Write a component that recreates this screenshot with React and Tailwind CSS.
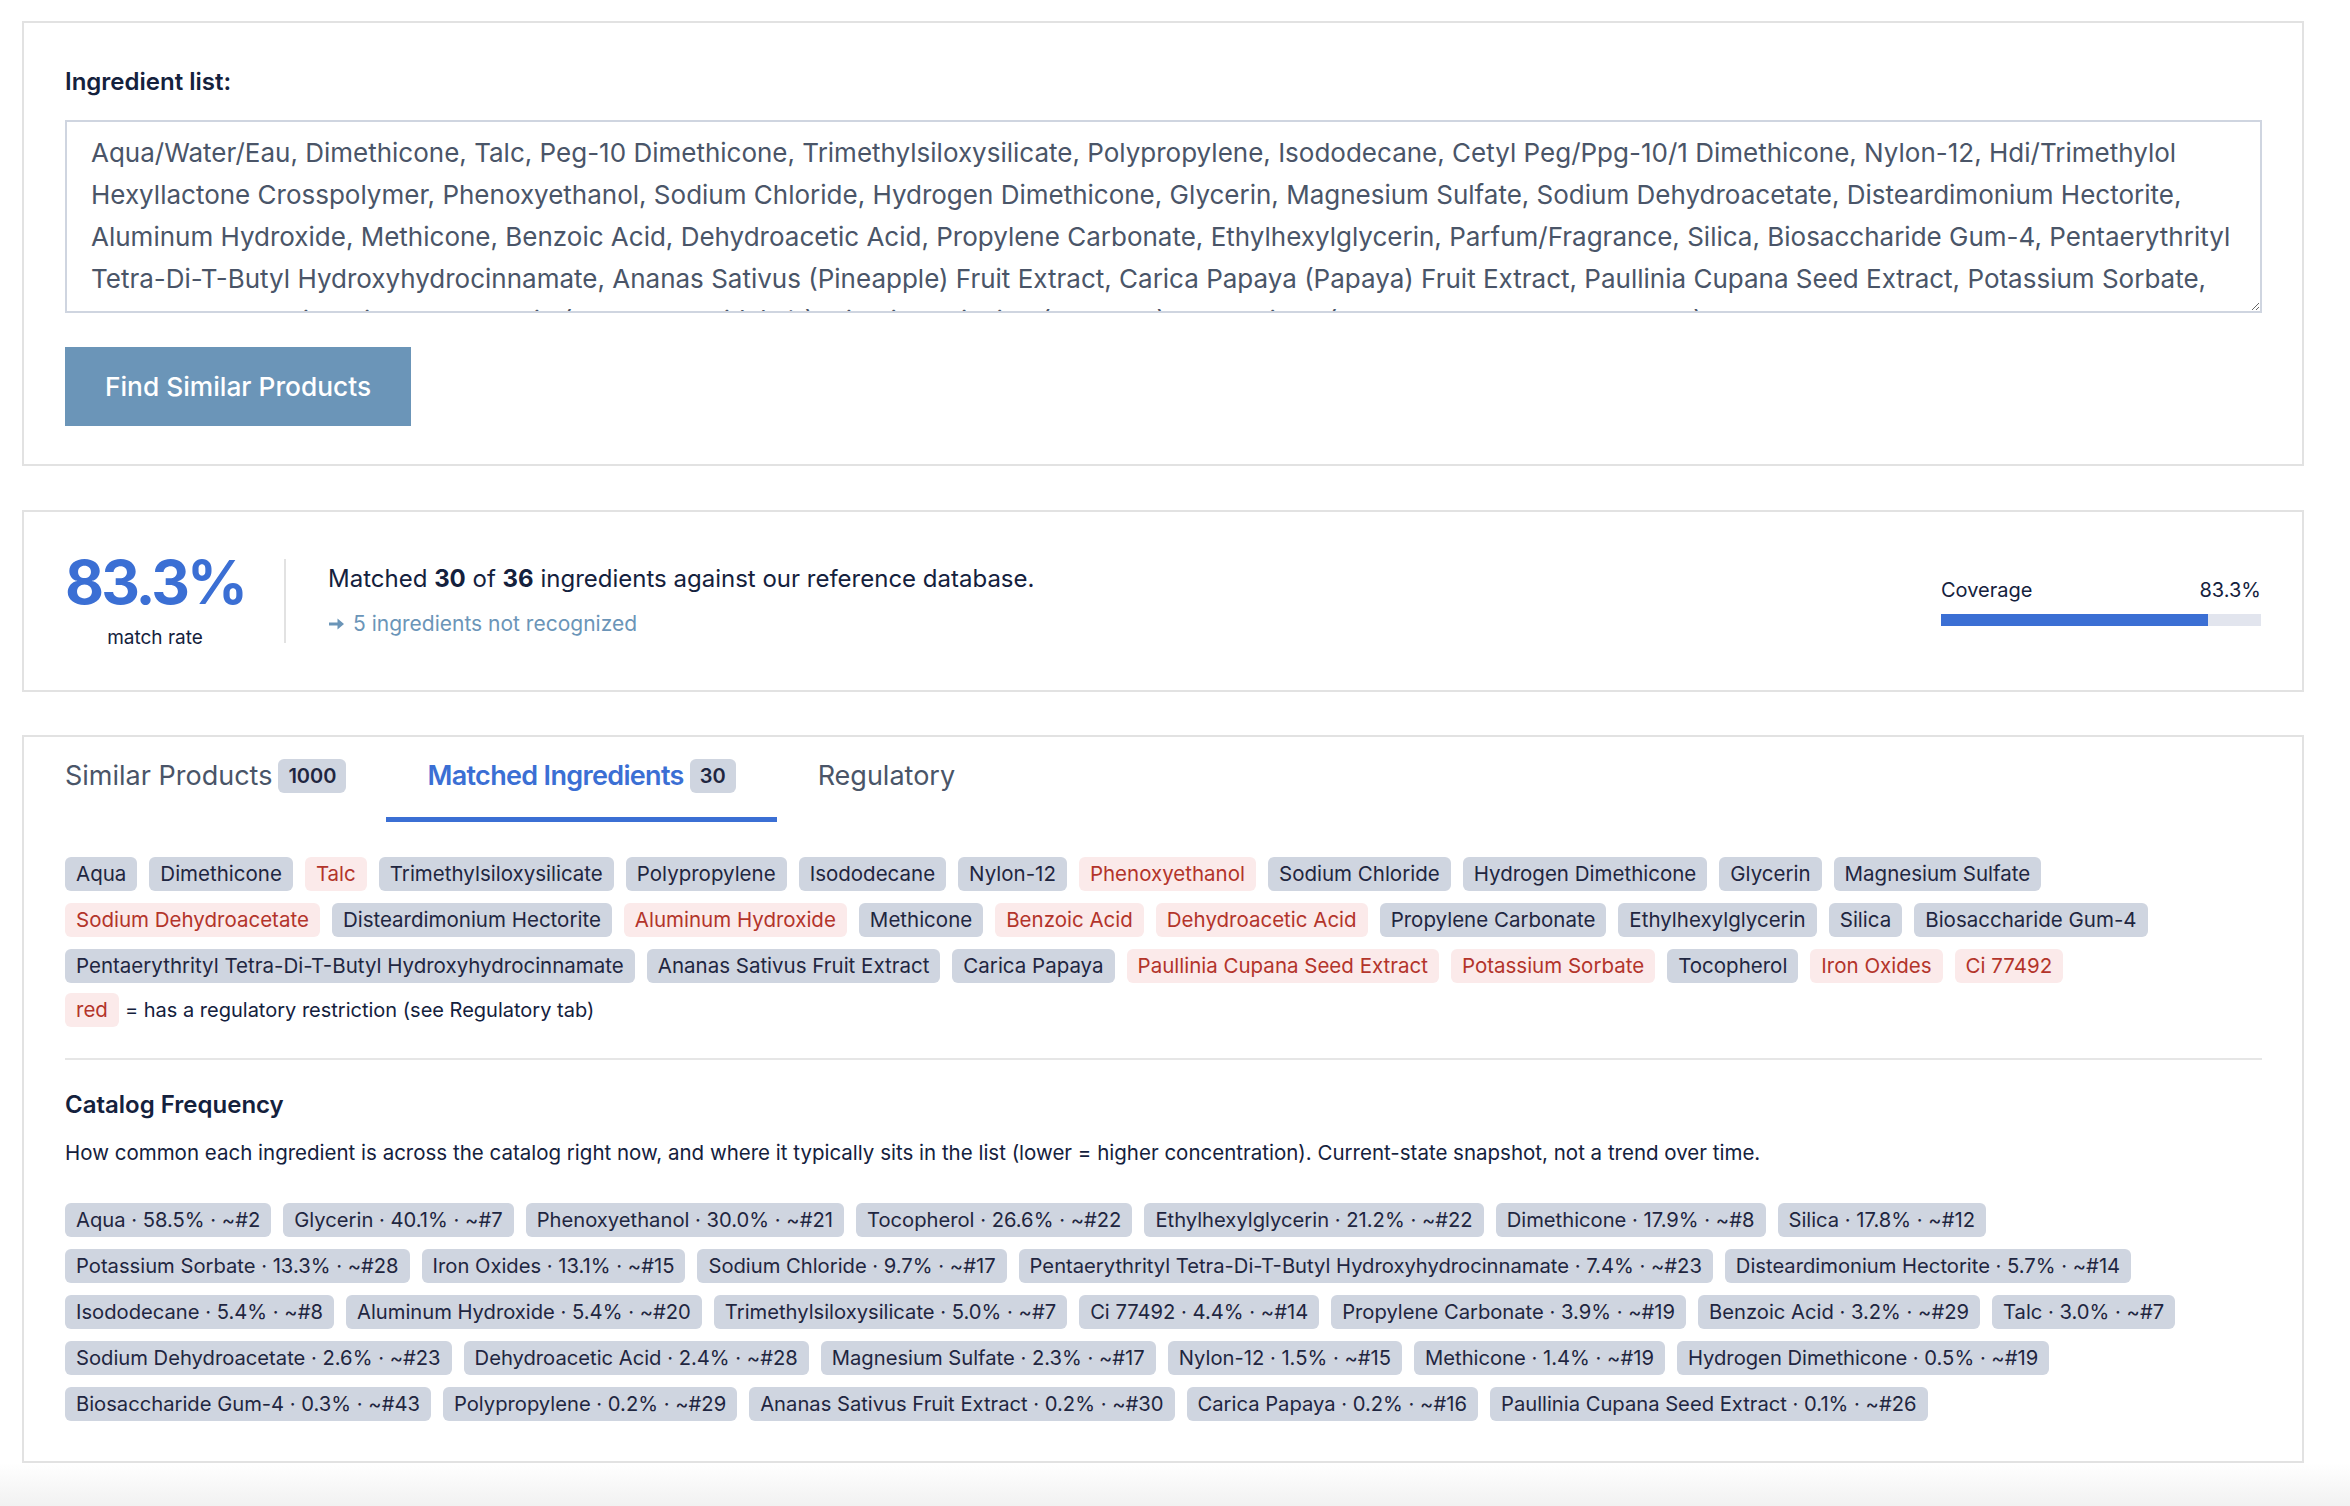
import React, { useState } from 'react';

const INGREDIENTS =
  'Aqua/Water/Eau, Dimethicone, Talc, Peg-10 Dimethicone, Trimethylsiloxysilicate, Polypropylene, Isododecane, Cetyl Peg/Ppg-10/1 Dimethicone, Nylon-12, Hdi/Trimethylol Hexyllactone Crosspolymer, Phenoxyethanol, Sodium Chloride, Hydrogen Dimethicone, Glycerin, Magnesium Sulfate, Sodium Dehydroacetate, Disteardimonium Hectorite, Aluminum Hydroxide, Methicone, Benzoic Acid, Dehydroacetic Acid, Propylene Carbonate, Ethylhexylglycerin, Parfum/Fragrance, Silica, Biosaccharide Gum-4, Pentaerythrityl Tetra-Di-T-Butyl Hydroxyhydrocinnamate, Ananas Sativus (Pineapple) Fruit Extract, Carica Papaya (Papaya) Fruit Extract, Paullinia Cupana Seed Extract, Potassium Sorbate, Tocopherol, Sorbic Acid, May Contain (Peut Contenir) (+/-): Titanium Dioxide (CI 77891), Iron Oxides (CI 77491, CI 77492, CI 77499)';

// rows kept as in the layout, r = regulatory restriction
const matchedRows = [
  [['Aqua'], ['Dimethicone'], ['Talc', 'r'], ['Trimethylsiloxysilicate'], ['Polypropylene'], ['Isododecane'], ['Nylon-12'], ['Phenoxyethanol', 'r'], ['Sodium Chloride'], ['Hydrogen Dimethicone'], ['Glycerin'], ['Magnesium Sulfate']],
  [['Sodium Dehydroacetate', 'r'], ['Disteardimonium Hectorite'], ['Aluminum Hydroxide', 'r'], ['Methicone'], ['Benzoic Acid', 'r'], ['Dehydroacetic Acid', 'r'], ['Propylene Carbonate'], ['Ethylhexylglycerin'], ['Silica'], ['Biosaccharide Gum-4']],
  [['Pentaerythrityl Tetra-Di-T-Butyl Hydroxyhydrocinnamate'], ['Ananas Sativus Fruit Extract'], ['Carica Papaya'], ['Paullinia Cupana Seed Extract', 'r'], ['Potassium Sorbate', 'r'], ['Tocopherol'], ['Iron Oxides', 'r'], ['Ci 77492', 'r']],
];

const freqRows = [
  [['Aqua', '58.5', 2], ['Glycerin', '40.1', 7], ['Phenoxyethanol', '30.0', 21], ['Tocopherol', '26.6', 22], ['Ethylhexylglycerin', '21.2', 22], ['Dimethicone', '17.9', 8], ['Silica', '17.8', 12]],
  [['Potassium Sorbate', '13.3', 28], ['Iron Oxides', '13.1', 15], ['Sodium Chloride', '9.7', 17], ['Pentaerythrityl Tetra-Di-T-Butyl Hydroxyhydrocinnamate', '7.4', 23], ['Disteardimonium Hectorite', '5.7', 14]],
  [['Isododecane', '5.4', 8], ['Aluminum Hydroxide', '5.4', 20], ['Trimethylsiloxysilicate', '5.0', 7], ['Ci 77492', '4.4', 14], ['Propylene Carbonate', '3.9', 19], ['Benzoic Acid', '3.2', 29], ['Talc', '3.0', 7]],
  [['Sodium Dehydroacetate', '2.6', 23], ['Dehydroacetic Acid', '2.4', 28], ['Magnesium Sulfate', '2.3', 17], ['Nylon-12', '1.5', 15], ['Methicone', '1.4', 19], ['Hydrogen Dimethicone', '0.5', 19]],
  [['Biosaccharide Gum-4', '0.3', 43], ['Polypropylene', '0.2', 29], ['Ananas Sativus Fruit Extract', '0.2', 30], ['Carica Papaya', '0.2', 16], ['Paullinia Cupana Seed Extract', '0.1', 26]],
];

function Chip({ children, red, small }) {
  return (
    <span
      className={
        'inline-flex items-center h-[34px] px-[11px] rounded-[6px] leading-none ' +
        (small ? 'text-[20.2px] ' : 'text-[20.5px] ') +
        (red ? 'bg-[#fbeaea] text-[#b3342a]' : 'bg-[#cfd5e0] text-[#1f2640]')
      }
    >
      {children}
    </span>
  );
}

function Tab({ label, count, active, first, onClick }) {
  return (
    <button
      onClick={onClick}
      className={
        'flex items-center gap-[6px] pt-[22px] pb-[24px] border-b-[5px] text-[27px] leading-[30px] ' +
        (first ? 'pl-0 pr-[40px] ' : 'px-[41px] ') +
        (active ? 'border-[#3b6fd4] text-[#3b6fd4] font-semibold tracking-tight' : 'border-transparent text-[#4a5568]')
      }
    >
      <span>{label}</span>
      {count != null && (
        <span className="inline-flex items-center h-[34px] px-[10px] rounded-[6px] bg-[#cfd5e0] text-[#1f2640] text-[20px] font-semibold tracking-normal">
          {count}
        </span>
      )}
    </button>
  );
}

export default function App() {
  const [text, setText] = useState(INGREDIENTS);
  const [tab, setTab] = useState('matched');

  return (
    <div className="min-h-[1506px] bg-white font-['Inter',sans-serif] text-[#14213d]">
      <div className="pl-[22px] pr-[46px] pt-[21px] flex flex-col gap-[44px]">
        {/* Input */}
        <div className="border-2 border-[#e2e2e2] pl-[41px] pr-[40px] pt-[43px] pb-[38px]">
          <div className="text-[24px] leading-[32px] font-semibold mb-[22px]">Ingredient list:</div>
          <textarea
            value={text}
            onChange={(e) => setText(e.target.value)}
            className="block w-full h-[193px] border-2 border-[#cfd5e0] pt-[10px] px-[24px] text-[26px] leading-[42px] text-[#4a5568] overflow-hidden outline-none"
          />
          <button className="mt-[34px] h-[79px] px-[40px] bg-[#6b95b8] text-white text-[26.3px] font-medium">
            Find Similar Products
          </button>
        </div>

        {/* Summary */}
        <div className="border-2 border-[#e2e2e2] h-[182px] pl-[44px] pr-[41px] flex items-center">
          <div className="w-[174px] flex flex-col items-center">
            <div className="text-[60px] leading-[64px] font-bold tracking-[-0.05em] text-[#3b6fd4]">83.3%</div>
            <div className="mt-[10px] text-[19px] leading-[28px]">match rate</div>
          </div>
          <div className="w-[2px] h-[84px] bg-[#e2e2e2] mx-[42px]" />
          <div className="flex-1 flex flex-col">
            <div className="text-[24px] leading-[32px]">
              Matched <b className="font-bold">30</b> of <b className="font-bold">36</b> ingredients against our reference database.
            </div>
            <div className="mt-[14px] flex items-center gap-[8px] text-[21px] leading-[30px] text-[#6b95b8]">
              <svg width="17" height="14" viewBox="0 0 17 14" fill="#6b95b8">
                <path d="M1 5.5h8.5V1.5L16 7l-6.5 5.5V8.5H1z" />
              </svg>
              <span>5 ingredients not recognized</span>
            </div>
          </div>
          <div className="w-[320px] flex flex-col">
            <div className="flex justify-between text-[20px] leading-[28px]">
              <span>Coverage</span>
              <span>83.3%</span>
            </div>
            <div className="mt-[10px] h-[12px] bg-[#e2e5ee]">
              <div className="h-full bg-[#3b6fd4]" style={{ width: '83.3%' }} />
            </div>
          </div>
        </div>

        {/* Results */}
        <div className="-mt-[1px] border-2 border-[#e2e2e2] pl-[41px] pr-[40px] pb-[40px]">
          <div className="flex">
            <Tab first label="Similar Products" count="1000" active={tab === 'similar'} onClick={() => setTab('similar')} />
            <Tab label="Matched Ingredients" count="30" active={tab === 'matched'} onClick={() => setTab('matched')} />
            <Tab label="Regulatory" active={tab === 'reg'} onClick={() => setTab('reg')} />
          </div>

          <div className="mt-[35px] flex flex-col gap-[12px]">
            {matchedRows.map((row, i) => (
              <div key={i} className="flex gap-[12px]">
                {row.map(([name, r]) => (
                  <Chip key={name} red={!!r}>{name}</Chip>
                ))}
              </div>
            ))}
            <div className="-mt-[2px] flex items-center gap-[6px] text-[20px]">
              <Chip red>red</Chip>
              <span>= has a regulatory restriction (see Regulatory tab)</span>
            </div>
          </div>

          <div className="mt-[31px] h-[2px] bg-[#e6e6e6]" />

          <div className="mt-[29px] text-[24px] leading-[32px] font-semibold">Catalog Frequency</div>
          <div className="mt-[17px] text-[20.5px] leading-[30px]">
            How common each ingredient is across the catalog right now, and where it typically sits in the list (lower = higher concentration). Current-state snapshot, not a trend over time.
          </div>

          <div className="mt-[35px] flex flex-col gap-[12px]">
            {freqRows.map((row, i) => (
              <div key={i} className="flex gap-[12px]">
                {row.map(([name, pct, pos]) => (
                  <Chip key={name} small>
                    {name} · {pct}% · ~#{pos}
                  </Chip>
                ))}
              </div>
            ))}
          </div>
        </div>
      </div>
      <div className="h-[44px] bg-gradient-to-b from-white to-[#f1f1f1]" />
    </div>
  );
}
